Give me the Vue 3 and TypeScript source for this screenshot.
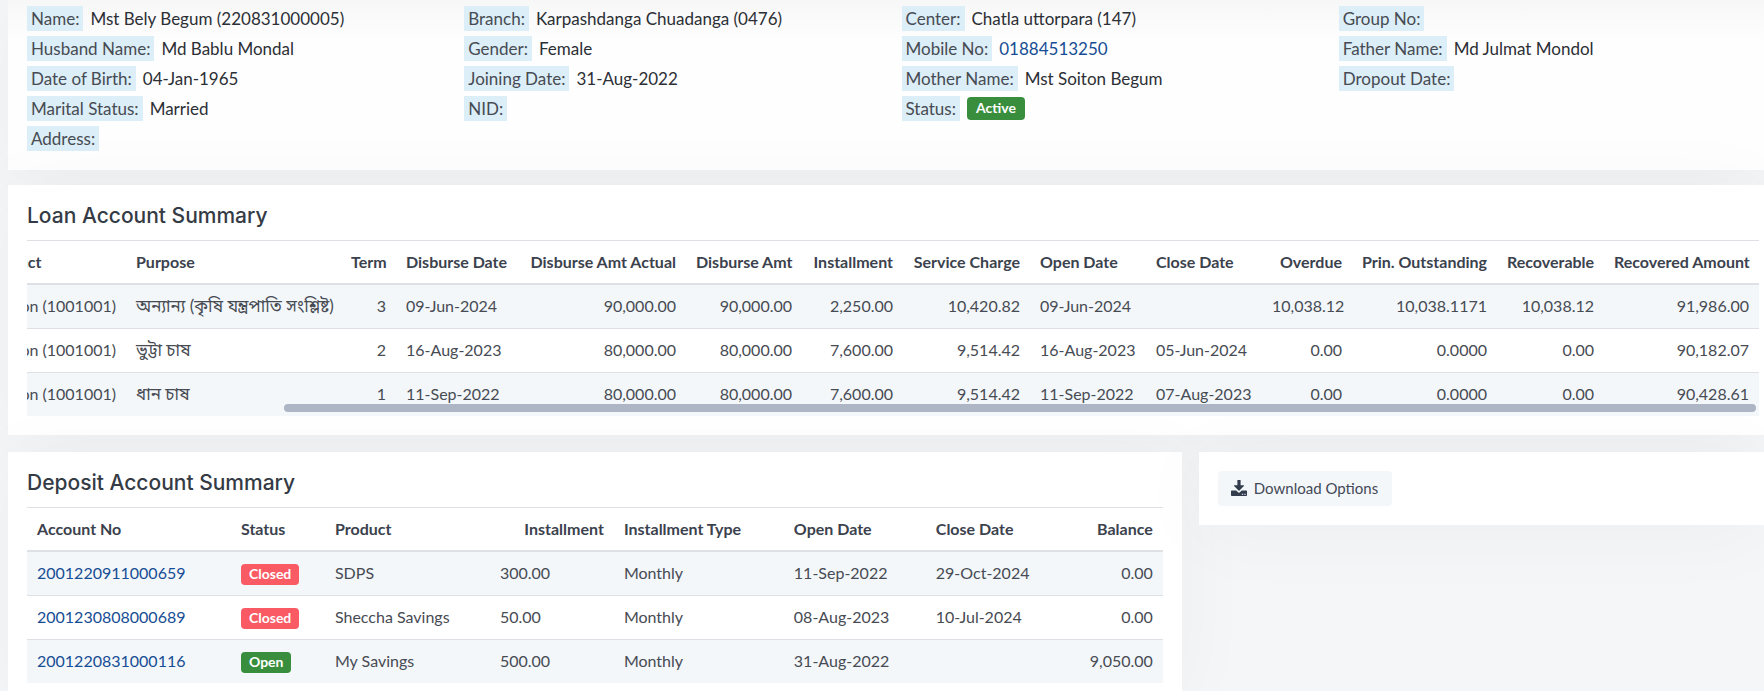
<script setup lang="ts">
interface Field { label: string; value?: string; kind?: 'link' | 'badge' }
interface Column { key: string; title: string; width: number; right?: boolean; rightHead?: boolean }
type Row = Record<string, string>

const fieldColumns: Field[][] = [
  [
    { label: 'Name:', value: 'Mst Bely Begum (220831000005)' },
    { label: 'Husband Name:', value: 'Md Bablu Mondal' },
    { label: 'Date of Birth:', value: '04-Jan-1965' },
    { label: 'Marital Status:', value: 'Married' },
    { label: 'Address:' },
  ],
  [
    { label: 'Branch:', value: 'Karpashdanga Chuadanga (0476)' },
    { label: 'Gender:', value: 'Female' },
    { label: 'Joining Date:', value: '31-Aug-2022' },
    { label: 'NID:' },
  ],
  [
    { label: 'Center:', value: 'Chatla uttorpara (147)' },
    { label: 'Mobile No:', value: '01884513250', kind: 'link' },
    { label: 'Mother Name:', value: 'Mst Soiton Begum' },
    { label: 'Status:', value: 'Active', kind: 'badge' },
  ],
  [
    { label: 'Group No:' },
    { label: 'Father Name:', value: 'Md Julmat Mondol' },
    { label: 'Dropout Date:' },
  ],
]

const loanColumns: Column[] = [
  { key: 'product', title: 'Product', width: 151, right: true },
  { key: 'purpose', title: 'Purpose', width: 215 },
  { key: 'term', title: 'Term', width: 55, right: true, rightHead: true },
  { key: 'disbursed', title: 'Disburse Date', width: 121 },
  { key: 'actual', title: 'Disburse Amt Actual', width: 169, right: true, rightHead: true },
  { key: 'amount', title: 'Disburse Amt', width: 116, right: true, rightHead: true },
  { key: 'installment', title: 'Installment', width: 101, right: true, rightHead: true },
  { key: 'charge', title: 'Service Charge', width: 127, right: true, rightHead: true },
  { key: 'opened', title: 'Open Date', width: 116 },
  { key: 'closed', title: 'Close Date', width: 116 },
  { key: 'overdue', title: 'Overdue', width: 90, right: true, rightHead: true },
  { key: 'principal', title: 'Prin. Outstanding', width: 145, right: true, rightHead: true },
  { key: 'recoverable', title: 'Recoverable', width: 107, right: true, rightHead: true },
  { key: 'recovered', title: 'Recovered Amount', width: 155, right: true, rightHead: true },
]

const loans: Row[] = [
  { product: 'on (1001001)', purpose: 'অন্যান্য (কৃষি যন্ত্রপাতি সংশ্লিষ্ট)', term: '3', disbursed: '09-Jun-2024', actual: '90,000.00', amount: '90,000.00', installment: '2,250.00', charge: '10,420.82', opened: '09-Jun-2024', closed: '', overdue: '10,038.12', principal: '10,038.1171', recoverable: '10,038.12', recovered: '91,986.00' },
  { product: 'on (1001001)', purpose: 'ভুট্টা চাষ', term: '2', disbursed: '16-Aug-2023', actual: '80,000.00', amount: '80,000.00', installment: '7,600.00', charge: '9,514.42', opened: '16-Aug-2023', closed: '05-Jun-2024', overdue: '0.00', principal: '0.0000', recoverable: '0.00', recovered: '90,182.07' },
  { product: 'on (1001001)', purpose: 'ধান চাষ', term: '1', disbursed: '11-Sep-2022', actual: '80,000.00', amount: '80,000.00', installment: '7,600.00', charge: '9,514.42', opened: '11-Sep-2022', closed: '07-Aug-2023', overdue: '0.00', principal: '0.0000', recoverable: '0.00', recovered: '90,428.61' },
]

const depositColumns: Column[] = [
  { key: 'account', title: 'Account No', width: 204 },
  { key: 'status', title: 'Status', width: 94 },
  { key: 'product', title: 'Product', width: 165 },
  { key: 'installment', title: 'Installment', width: 124, rightHead: true },
  { key: 'type', title: 'Installment Type', width: 170 },
  { key: 'opened', title: 'Open Date', width: 142 },
  { key: 'closed', title: 'Close Date', width: 142 },
  { key: 'balance', title: 'Balance', width: 95, right: true, rightHead: true },
]
const depositTotal = depositColumns.reduce((sum, c) => sum + c.width, 0)

const deposits: Row[] = [
  { account: '2001220911000659', status: 'Closed', product: 'SDPS', installment: '300.00', type: 'Monthly', opened: '11-Sep-2022', closed: '29-Oct-2024', balance: '0.00' },
  { account: '2001230808000689', status: 'Closed', product: 'Sheccha Savings', installment: '50.00', type: 'Monthly', opened: '08-Aug-2023', closed: '10-Jul-2024', balance: '0.00' },
  { account: '2001220831000116', status: 'Open', product: 'My Savings', installment: '500.00', type: 'Monthly', opened: '31-Aug-2022', closed: '', balance: '9,050.00' },
]
</script>

<template>
  <main class="page">
    <section class="card profile">
      <dl v-for="(fields, i) in fieldColumns" :key="i" class="fields">
        <div v-for="field in fields" :key="field.label" class="field">
          <dt>{{ field.label }}</dt>
          <dd v-if="field.value">
            <a v-if="field.kind === 'link'" :href="'tel:' + field.value">{{ field.value }}</a>
            <span v-else-if="field.kind === 'badge'" class="badge large green">{{ field.value }}</span>
            <template v-else>{{ field.value }}</template>
          </dd>
        </div>
      </dl>
    </section>

    <section class="card loans">
      <h2>Loan Account Summary</h2>
      <div class="scroller">
        <table class="loan-table">
          <colgroup>
            <col v-for="c in loanColumns" :key="c.key" :style="{ width: c.width + 'px' }">
          </colgroup>
          <thead>
            <tr>
              <th v-for="c in loanColumns" :key="c.key" :class="{ right: c.rightHead }">{{ c.title }}</th>
            </tr>
          </thead>
          <tbody>
            <tr v-for="row in loans" :key="row.term">
              <td v-for="c in loanColumns" :key="c.key" :class="{ right: c.right, bengali: c.key === 'purpose' }">{{ row[c.key] }}</td>
            </tr>
          </tbody>
        </table>
        <div class="thumb"></div>
      </div>
    </section>

    <div class="split">
      <section class="card deposits">
        <h2>Deposit Account Summary</h2>
        <table>
          <colgroup>
            <col v-for="c in depositColumns" :key="c.key" :style="{ width: (c.width / depositTotal) * 100 + '%' }">
          </colgroup>
          <thead>
            <tr>
              <th v-for="c in depositColumns" :key="c.key" :class="{ right: c.rightHead }">{{ c.title }}</th>
            </tr>
          </thead>
          <tbody>
            <tr v-for="row in deposits" :key="row.account">
              <td v-for="c in depositColumns" :key="c.key" :class="{ right: c.right }">
                <a v-if="c.key === 'account'" href="#">{{ row.account }}</a>
                <span v-else-if="c.key === 'status'" class="badge" :class="row.status === 'Open' ? 'green' : 'red'">{{ row.status }}</span>
                <template v-else>{{ row[c.key] }}</template>
              </td>
            </tr>
          </tbody>
        </table>
      </section>

      <aside class="card actions">
        <button type="button" class="download">
          <svg viewBox="0 0 16 16" width="16" height="16" aria-hidden="true">
            <path fill="#323c4d" d="M6.4 0h3.2v5.2h2.9c.5 0 .7.5.4.8L8.5 10.500a.7.7 0 0 1-1 0L3.100 6c-.3-.3-.1-.8.4-.8h2.900zM.7 10.500h4.500l1.600 1.600c.7.7 1.700.7 2.400 0l1.600-1.600h4.500c.4 0 .7.3.7.7v4.100c0 .4-.3.700-.7.700H.7a.7.7 0 0 1-.7-.7v-4.100c0-.4.3-.7.700-.7z" />
            <path fill="#f3f7fa" d="M10.800 13.700h1.400v1h-1.400zM13.300 13.700h1.400v1h-1.400z" />
          </svg>
          Download Options
        </button>
      </aside>
    </div>
  </main>
</template>

<style>
body {
  margin: 0;
  background: #f5f6f8;
}
</style>

<style scoped>
.page {
  box-sizing: border-box;
  min-height: 100vh;
  padding-left: 8px;
  overflow: hidden;
  display: flex;
  flex-direction: column;
  color: #474b53;
  font-family: Lato, "Noto Sans Bengali", sans-serif;
  font-size: 16px;
  line-height: 24px;
}

.card {
  background: #fff;
  box-shadow: 0 8px 80px rgba(0, 0, 0, 0.04);
}

.profile {
  display: grid;
  grid-template-columns: repeat(4, 1fr);
  column-gap: 17px;
  padding: 6px 5px 19px 19px;
  background: linear-gradient(#f7f7f7, #fefefe 44px);
}

.fields {
  margin: 0;
  display: flex;
  flex-direction: column;
  gap: 5px;
}

.field {
  display: flex;
  align-items: center;
  gap: 7px;
  height: 25px;
  font-size: 17px;
  line-height: 25px;
}

.field dt {
  padding: 0 4px;
  background: #dceef7;
}

.field dd {
  margin: 0;
  color: #2c2f35;
}

a {
  color: #164d94;
  text-decoration: none;
}

.badge {
  display: inline-block;
  box-sizing: border-box;
  height: 21px;
  padding: 0 8px;
  border-radius: 4px;
  color: #fff;
  font-size: 14px;
  font-weight: 700;
  line-height: 19px;
  vertical-align: middle;
}

.badge.large {
  height: 23px;
  padding: 0 9px;
  line-height: 22px;
}

.field .badge {
  display: block;
}

.green {
  background: #388e3c;
}

.red {
  background: #f95a64;
}

.loans {
  margin-top: 15px;
  padding: 19px 5px 19px 19px;
}

h2 {
  margin: 0;
  padding-bottom: 12px;
  color: #353b45;
  font-family: Inter, sans-serif;
  font-size: 21px;
  font-weight: 500;
  line-height: 24px;
}

.scroller {
  position: relative;
  display: flex;
  justify-content: flex-end;
  overflow: hidden;
}

.thumb {
  position: absolute;
  right: 3px;
  bottom: 4px;
  width: 85%;
  height: 8px;
  border-radius: 4px;
  background: #aeb5c4;
}

table {
  width: 100%;
  table-layout: fixed;
  border-collapse: separate;
  border-spacing: 0;
}

.loan-table {
  flex: none;
  width: 1784px;
}

th,
td {
  height: 41px;
  padding: 0 10px 2px;
  border-top: 1px solid #dde1e6;
  text-align: left;
  white-space: nowrap;
}

th {
  height: 42px;
  padding-bottom: 0;
  border-bottom: 2px solid #dde1e6;
  color: #3b424d;
  font-weight: 700;
}

tbody tr:first-child td {
  height: 41px;
  border-top: 0;
}

tbody tr:nth-child(odd) {
  background: #f3f7fa;
}

.bengali {
  font-size: 17px;
}

.right {
  text-align: right;
}

.split {
  display: grid;
  grid-template-columns: 27fr 13fr;
  align-items: start;
  gap: 17px;
  margin-top: 17px;
  flex: 1;
}

.deposits {
  align-self: stretch;
  padding: 19px 19px 8px;
}

.actions {
  padding: 19px;
}

.download {
  display: flex;
  align-items: center;
  gap: 7px;
  height: 35px;
  padding: 0 14px 2px 13px;
  border: 0;
  border-radius: 4px;
  background: #f3f7fa;
  color: #434956;
  font-family: inherit;
  font-size: 15px;
  line-height: 24px;
}
</style>
